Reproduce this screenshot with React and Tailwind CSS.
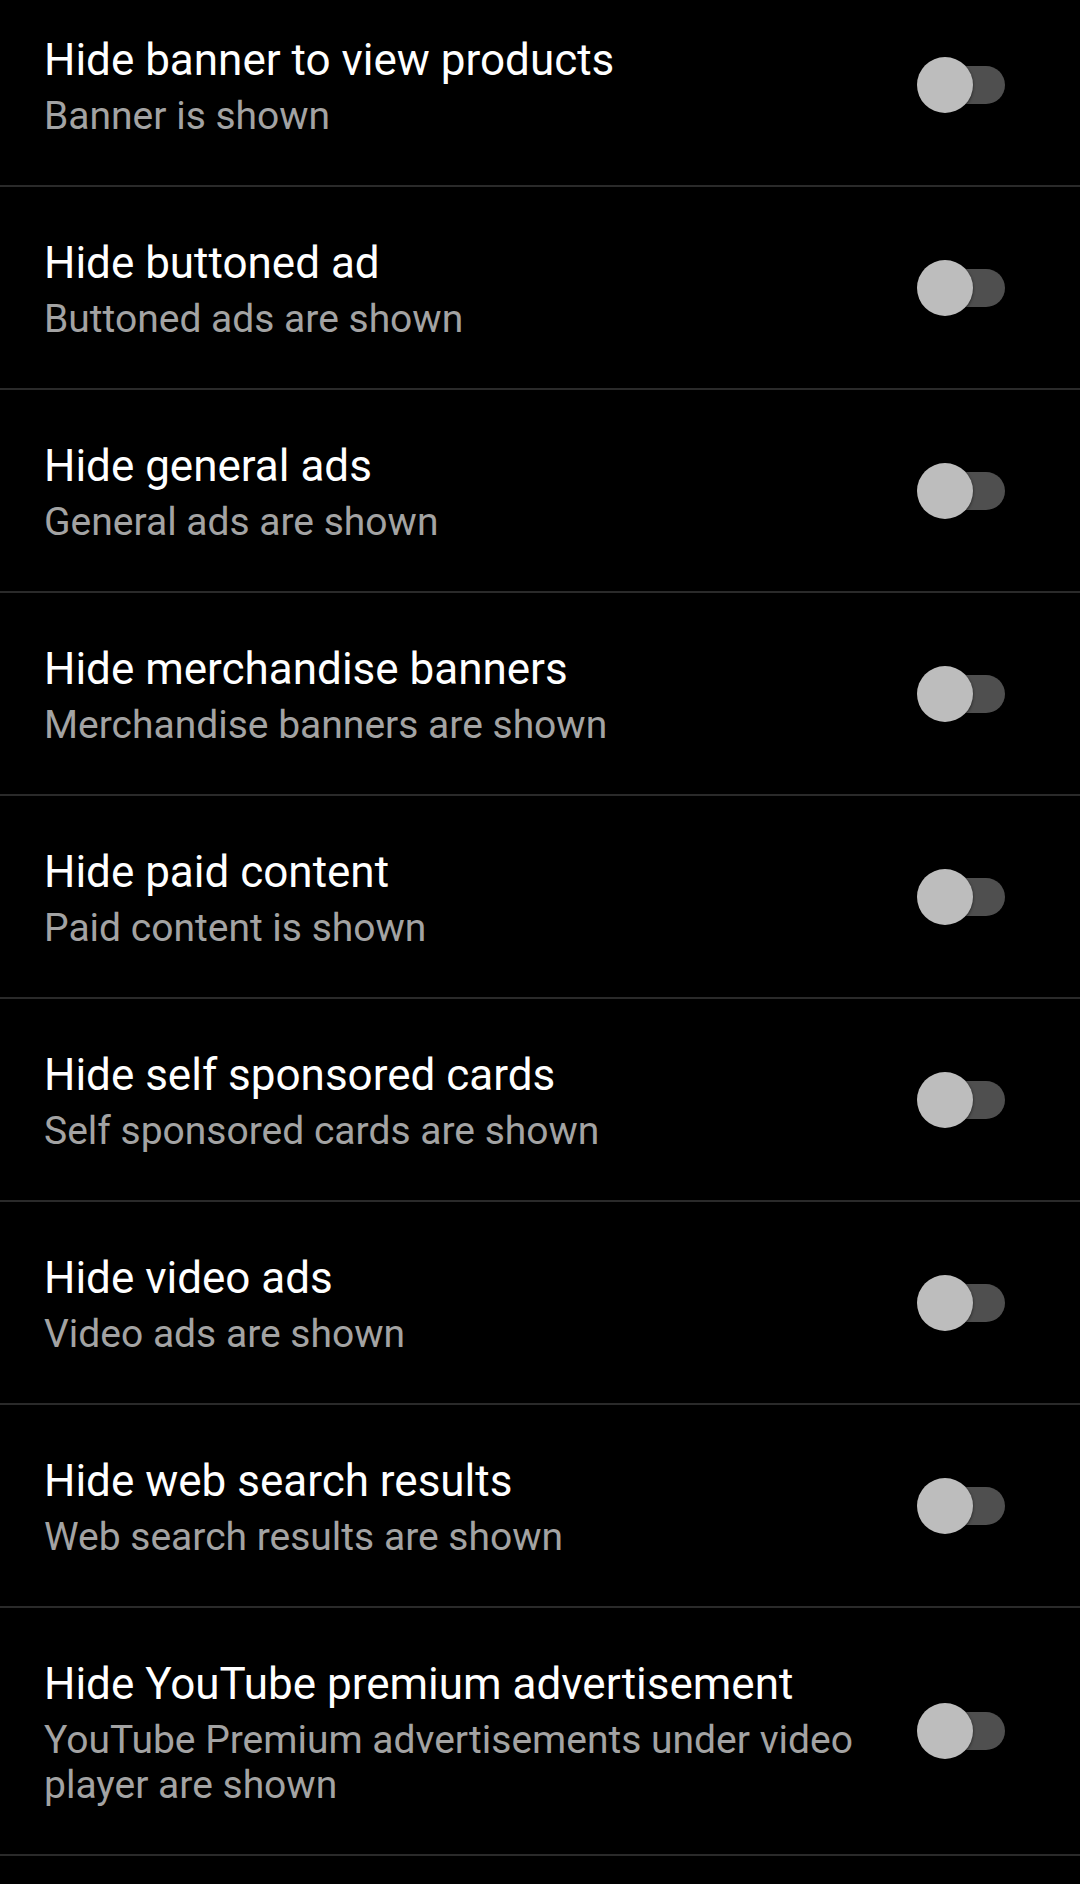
import React, { useState } from 'react';

const settings = [
  { id: 'banner', title: 'Hide banner to view products', summary: 'Banner is shown' },
  { id: 'buttoned', title: 'Hide buttoned ad', summary: 'Buttoned ads are shown' },
  { id: 'general', title: 'Hide general ads', summary: 'General ads are shown' },
  { id: 'merch', title: 'Hide merchandise banners', summary: 'Merchandise banners are shown' },
  { id: 'paid', title: 'Hide paid content', summary: 'Paid content is shown' },
  { id: 'self', title: 'Hide self sponsored cards', summary: 'Self sponsored cards are shown' },
  { id: 'video', title: 'Hide video ads', summary: 'Video ads are shown' },
  { id: 'web', title: 'Hide web search results', summary: 'Web search results are shown' },
  {
    id: 'premium',
    title: 'Hide YouTube premium advertisement',
    summary: 'YouTube Premium advertisements under video player are shown',
  },
];

const Switch = ({ checked, onChange }) => (
  <button
    onClick={onChange}
    className="relative shrink-0 ml-[16px] mr-[75px] w-[80px] h-[38px] rounded-full bg-[#4f4f4f]"
  >
    <span
      className={
        checked
          ? 'absolute top-[-9px] left-[32px] w-[56px] h-[56px] rounded-full bg-[#80cbc4] shadow-[0_1px_3px_rgba(0,0,0,0.6)]'
          : 'absolute top-[-9px] left-[-8px] w-[56px] h-[56px] rounded-full bg-[#bdbdbd] shadow-[0_1px_3px_rgba(0,0,0,0.6)]'
      }
    />
  </button>
);

const App = () => {
  const [values, setValues] = useState({});

  const toggle = id => setValues({ ...values, [id]: !values[id] });

  return (
    <div className="min-h-screen bg-black overflow-hidden font-['Roboto','Liberation_Sans',sans-serif]">
      <div className="mt-[-16px]">
        {settings.map(item => (
          <div key={item.id} className="flex items-center pl-[44px] border-b-2 border-[#2a2a2a]">
            <div className="flex-1 min-w-0 pt-[50px] pb-[46px]">
              <div className="text-[44px] leading-[52px] text-white">{item.title}</div>
              <div className="mt-[8px] text-[39px] leading-[45px] text-[#a3a3a3]">
                {values[item.id] ? item.summary.replace('shown', 'hidden') : item.summary}
              </div>
            </div>
            <Switch checked={!!values[item.id]} onChange={() => toggle(item.id)} />
          </div>
        ))}
      </div>
    </div>
  );
};

export default App;
